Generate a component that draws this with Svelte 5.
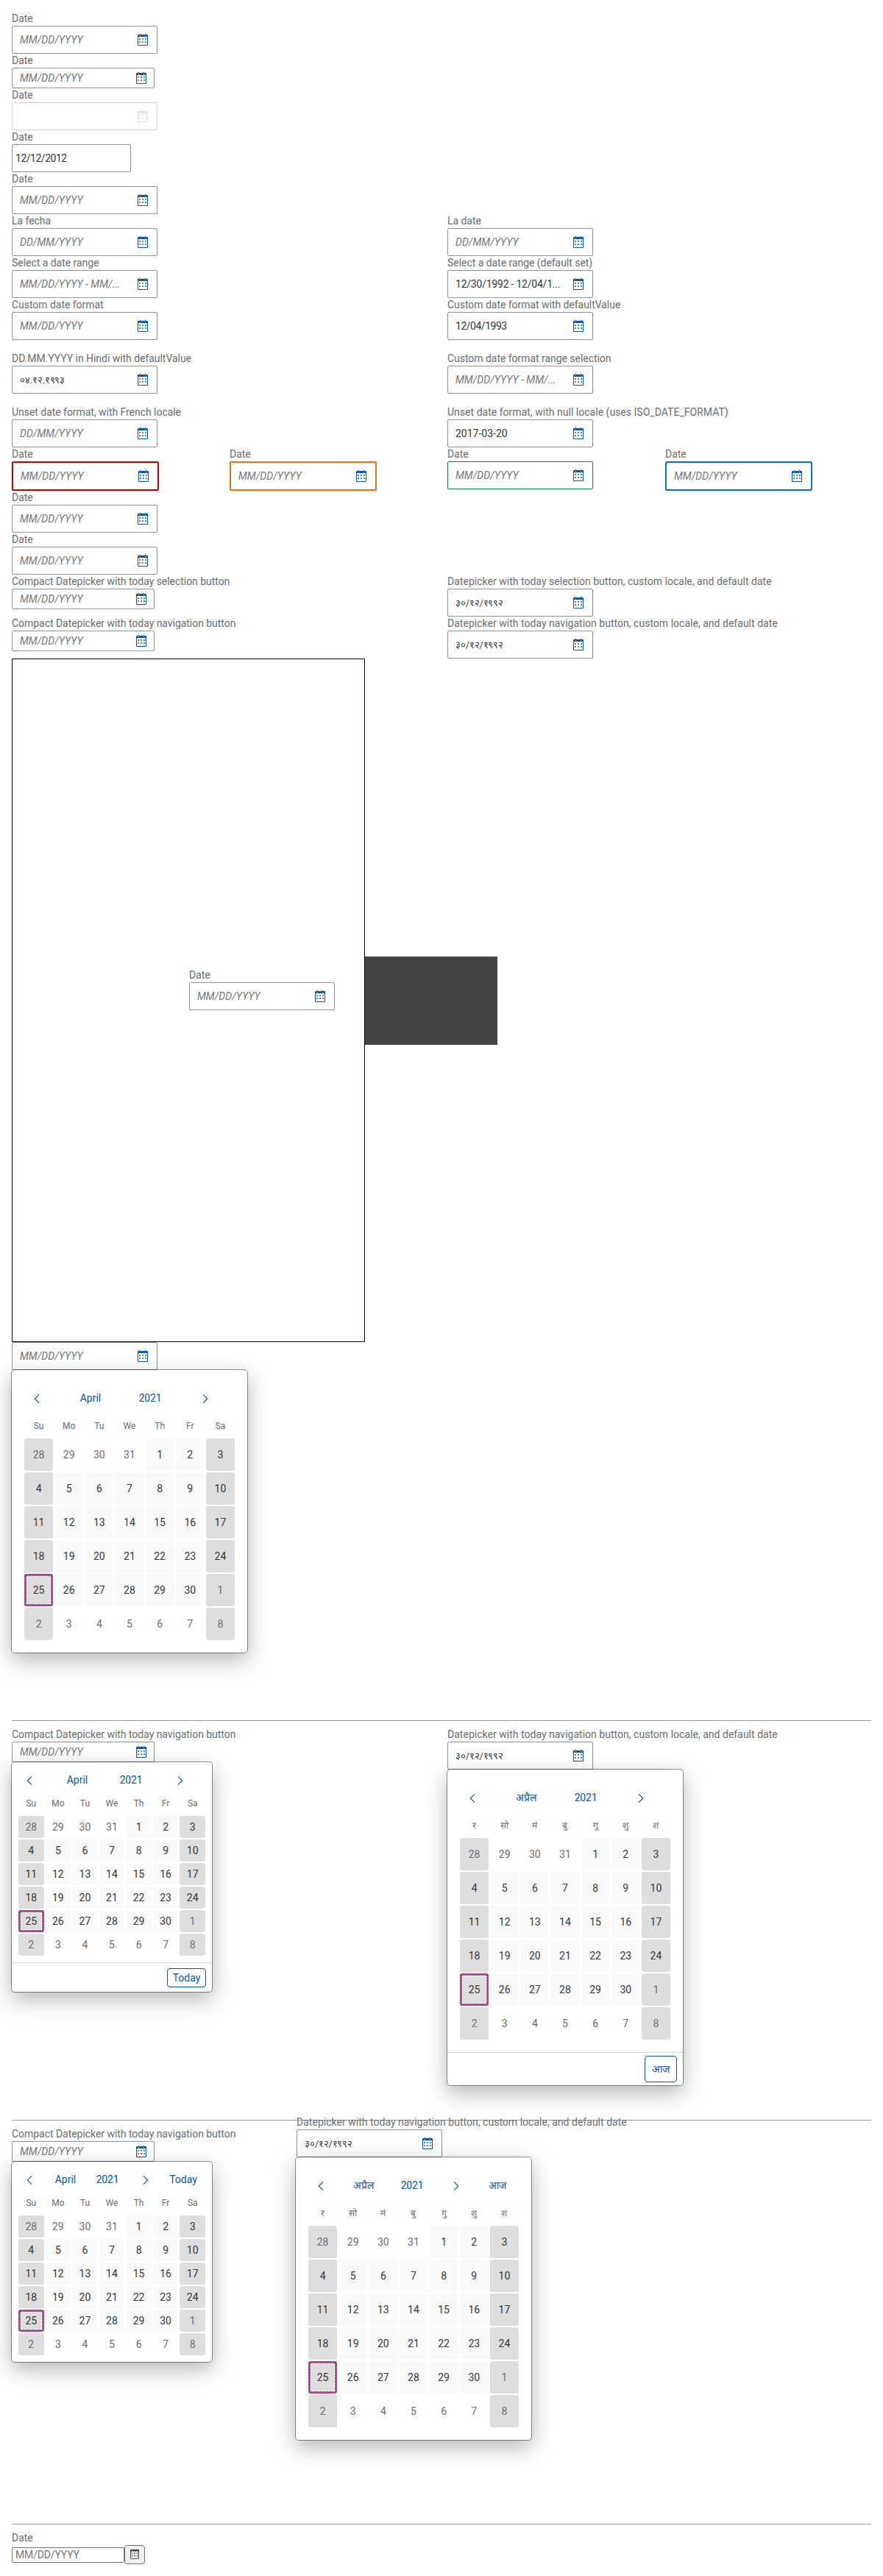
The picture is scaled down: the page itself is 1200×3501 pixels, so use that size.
<script>
  const EN = { month: 'April', today: 'Today', days: ['Su', 'Mo', 'Tu', 'We', 'Th', 'Fr', 'Sa'] };
  const HI = { month: 'अप्रैल', today: 'आज', days: ['र', 'सो', 'मं', 'बु', 'गु', 'शु', 'श'] };
  const NAV_LABEL = 'Compact Datepicker with today navigation button';
  const NAV_LABEL_HI = 'Datepicker with today navigation button, custom locale, and default date';

  const dates = Array.from({ length: 42 }, (_, i) => {
    const other = i < 4 || i > 33;
    const number = i < 4 ? 28 + i : i > 33 ? i - 33 : i - 3;
    return { number, other, weekend: i % 7 === 0 || i % 7 === 6, focused: i === 28 };
  });

  const rows = [
    [{ label: 'Date', placeholder: 'MM/DD/YYYY' }],
    [{ label: 'Date', placeholder: 'MM/DD/YYYY', compact: true }],
    [{ label: 'Date', disabled: true }],
    [{ label: 'Date', value: '12/12/2012', plain: true }],
    [{ label: 'Date', placeholder: 'MM/DD/YYYY' }],
    [{ label: 'La fecha', placeholder: 'DD/MM/YYYY' }, { label: 'La date', placeholder: 'DD/MM/YYYY' }],
    [
      { label: 'Select a date range', placeholder: 'MM/DD/YYYY - MM/...' },
      { label: 'Select a date range (default set)', value: '12/30/1992 - 12/04/1...', range: true }
    ],
    [
      { label: 'Custom date format', placeholder: 'MM/DD/YYYY' },
      { label: 'Custom date format with defaultValue', value: '12/04/1993' }
    ],
    [
      { label: 'DD.MM.YYYY in Hindi with defaultValue', value: '०४.१२.१९९३', hindi: true },
      { label: 'Custom date format range selection', placeholder: 'MM/DD/YYYY - MM/...' }
    ],
    [
      { label: 'Unset date format, with French locale', placeholder: 'DD/MM/YYYY' },
      {
        label: 'Unset date format, with null locale (uses ISO_DATE_FORMAT)',
        value: '2017-03-20',
        iso: true,
        wide: true
      }
    ],
    [
      { label: 'Date', placeholder: 'MM/DD/YYYY', state: 'error' },
      { label: 'Date', placeholder: 'MM/DD/YYYY', state: 'warning' },
      { label: 'Date', placeholder: 'MM/DD/YYYY', state: 'success' },
      { label: 'Date', placeholder: 'MM/DD/YYYY', state: 'information' }
    ],
    [{ label: 'Date', placeholder: 'MM/DD/YYYY' }],
    [{ label: 'Date', placeholder: 'MM/DD/YYYY' }],
    [
      { label: 'Compact Datepicker with today selection button', placeholder: 'MM/DD/YYYY', compact: true },
      {
        label: 'Datepicker with today selection button, custom locale, and default date',
        value: '३०/१२/१९९२',
        hindi: true,
        wide: true
      }
    ],
    [
      { label: NAV_LABEL, placeholder: 'MM/DD/YYYY', compact: true },
      { label: NAV_LABEL_HI, value: '३०/१२/१९९२', hindi: true, wide: true }
    ]
  ];
</script>

{#snippet calendarIcon()}
  <svg class="icon" viewBox="0 0 14 16" width="14" height="16" aria-hidden="true">
    <path
      fill="currentColor"
      fill-rule="evenodd"
      d="M3 0h1v1h6V0h1v1h2a1 1 0 0 1 1 1v13a1 1 0 0 1-1 1H1a1 1 0 0 1-1-1V2a1 1 0 0 1 1-1h2zM1 4v11h12V4zM3 2v1h1V2zM10 2v1h1V2z"
    />
    <path
      fill="currentColor"
      opacity="0.72"
      d="M2 6h2v2H2zM6 6h2v2H6zM10 6h2v2h-2zM2 10h2v2H2zM6 10h2v2H6zM10 10h2v2h-2z"
    />
  </svg>
{/snippet}

{#snippet chevron(next)}
  <svg class="chevron" class:next viewBox="0 0 8 12" width="8" height="12" aria-hidden="true">
    <path d="M7 .4 1.2 6 7 11.6" fill="none" stroke="currentColor" stroke-width="1.1" />
  </svg>
{/snippet}

{#snippet input(f)}
  <div class="input {f.state ?? ''}" class:compact={f.compact} class:disabled={f.disabled} class:plain={f.plain}>
    {#if f.placeholder}
      <span class="placeholder">{f.placeholder}</span>
    {:else}
      <span class="value" class:hindi={f.hindi} class:iso={f.iso} class:range={f.range}>{f.value ?? ''}</span>
    {/if}
    {#if !f.plain}{@render calendarIcon()}{/if}
  </div>
{/snippet}

{#snippet field(f)}
  <div class="field">
    <div class="label" class:wide={f.wide}>{f.label}</div>
    {@render input(f)}
  </div>
{/snippet}

{#snippet calendar(lang, compact, todayIn)}
  <div class="popover" class:compact>
    <div class="body">
      <div class="nav" class:with-today={todayIn === 'header'}>
        <span class="prev">{@render chevron(false)}</span>
        <span>{lang.month}</span>
        <span class="year">2021</span>
        <span>{@render chevron(true)}</span>
        {#if todayIn === 'header'}<span>{lang.today}</span>{/if}
      </div>
      <div class="weekdays">
        {#each lang.days as d}<span>{d}</span>{/each}
      </div>
      <div class="dates">
        {#each dates as d}
          <span class="date" class:other={d.other} class:weekend={d.weekend} class:focused={d.focused}>{d.number}</span>
        {/each}
      </div>
    </div>
    {#if todayIn === 'footer'}
      <div class="footer"><button class="today">{lang.today}</button></div>
    {/if}
  </div>
{/snippet}

<main>
  {#each rows as row, i}
    <div class="row" class:halves={row.length < 4} class:spaced={i === 8 || i === 9}>
      {#each row as f}{@render field(f)}{/each}
    </div>
  {/each}

  <div class="modal-box">
    <div class="modal-field">{@render field({ label: 'Date', placeholder: 'MM/DD/YYYY' })}</div>
    <div class="dark"></div>
  </div>

  <section class="open-default">
    <div class="anchor">
      {@render input({ placeholder: 'MM/DD/YYYY' })}
      {@render calendar(EN, false, '')}
    </div>
  </section>

  <hr />
  <section class="row halves open-footer">
    <div class="anchor">
      {@render field({ label: NAV_LABEL, placeholder: 'MM/DD/YYYY', compact: true })}
      {@render calendar(EN, true, 'footer')}
    </div>
    <div class="anchor">
      {@render field({ label: NAV_LABEL_HI, value: '३०/१२/१९९२', hindi: true, wide: true })}
      {@render calendar(HI, false, 'footer')}
    </div>
  </section>

  <hr />
  <section class="open-header">
    <div class="anchor first">
      {@render field({ label: NAV_LABEL, placeholder: 'MM/DD/YYYY', compact: true })}
      {@render calendar(EN, true, 'header')}
    </div>
    <div class="anchor raised">
      {@render field({ label: NAV_LABEL_HI, value: '३०/१२/१९९२', hindi: true, wide: true })}
      {@render calendar(HI, false, 'header')}
    </div>
  </section>

  <hr />
  <div class="label">Date</div>
  <div class="native">
    <div class="native-input">MM/DD/YYYY</div>
    <div class="native-button">{@render calendarIcon()}</div>
  </div>
</main>

<style>
  :global(body) {
    margin: 0;
    background: #fff;
  }
  main {
    box-sizing: border-box;
    height: 3501px;
    padding: 16px;
    overflow: hidden;
    color: #32363a;
    font: 14px/19px Roboto, 'Liberation Sans', sans-serif;
  }
  main :global(*) {
    box-sizing: border-box;
  }
  .row {
    display: grid;
    grid-template-columns: repeat(4, 296px);
    align-items: start;
  }
  .halves {
    grid-template-columns: repeat(2, 592px);
  }
  .spaced {
    margin-top: 16px;
  }
  .label {
    height: 19px;
    color: #6a6d70;
    white-space: nowrap;
    letter-spacing: -0.04px;
  }
  .label.wide {
    letter-spacing: 0.02px;
  }
  .input {
    display: flex;
    align-items: center;
    justify-content: space-between;
    width: 198px;
    height: 38px;
    padding: 0 12px 0 10px;
    border: 1px solid #89919a;
    border-radius: 2px;
    background: #fff;
    white-space: nowrap;
  }
  .input.compact {
    width: 194px;
    height: 28px;
    padding-right: 10px;
  }
  .input.plain {
    width: 162px;
    padding-left: 4px;
  }
  .input.disabled {
    border-color: #cfd3d6;
  }
  .input.disabled .icon {
    opacity: 0.16;
  }
  .error,
  .warning,
  .information {
    width: 200px;
    height: 40px;
    border-width: 2px;
  }
  .error {
    border-color: #b00;
  }
  .warning {
    border-color: #e9730c;
  }
  .success {
    border-color: #107e3e;
  }
  .information {
    border-color: #0a6ed1;
  }
  .placeholder {
    color: #74777a;
    font-style: italic;
  }
  .value {
    letter-spacing: -0.48px;
  }
  .value.range {
    letter-spacing: -0.22px;
  }
  .value.iso {
    letter-spacing: 0;
  }
  .value.hindi {
    font-size: 13px;
    letter-spacing: -0.18px;
  }
  .icon {
    display: block;
    flex: none;
    color: #0854a0;
  }

  .modal-box {
    display: flex;
    width: 480px;
    height: 929px;
    border: 1px solid #000;
  }
  .modal-field {
    flex: none;
    width: 479px;
    padding: 420px 0 0 240px;
  }
  .dark {
    flex: none;
    width: 180px;
    height: 120px;
    margin-top: 404px;
    background: #444;
  }

  hr {
    height: 1px;
    margin: 0 0 9px;
    border: 0;
    background: #9a9a9a;
  }
  .anchor {
    position: relative;
    width: max-content;
  }
  .open-default {
    height: 514px;
  }
  .open-footer {
    height: 533px;
  }
  .open-header {
    display: flex;
    align-items: flex-start;
    height: 539px;
  }
  .open-header .first {
    width: 387px;
  }
  .open-header .raised {
    margin-top: -16px;
  }
  .raised .popover {
    left: -1px;
  }

  .popover {
    position: absolute;
    top: 100%;
    left: 0;
    width: 320px;
    border-radius: 4px;
    background: #fff;
    box-shadow:
      0 0 0 1px rgba(0, 0, 0, 0.42),
      0 10px 30px rgba(0, 0, 0, 0.3);
  }
  .popover.compact {
    width: 272px;
  }
  .body {
    padding: 16px;
  }
  .compact .body {
    padding: 8px;
  }
  .nav {
    display: grid;
    grid-template-columns: 44px 94px 68px 82px;
    align-items: center;
    height: 44px;
    color: #0854a0;
    text-align: center;
  }
  .nav.with-today {
    grid-template-columns: 44px 64px 68px 52px 60px;
  }
  .compact .nav {
    grid-template-columns: 40px 82px 64px 70px;
    height: 32px;
  }
  .compact .nav.with-today {
    grid-template-columns: 40px 50px 64px 40px 62px;
  }
  .prev {
    padding-right: 8px;
  }
  .year {
    letter-spacing: -0.2px;
  }
  .chevron {
    display: inline-block;
    vertical-align: middle;
  }
  .chevron.next {
    transform: scaleX(-1);
  }
  .weekdays {
    display: grid;
    grid-template-columns: repeat(7, 1fr);
    height: 32px;
    color: #6a6d70;
    font-size: 12px;
    line-height: 32px;
    text-align: center;
  }
  .dates {
    display: grid;
    grid-template-columns: repeat(7, 1fr);
    grid-auto-rows: 46px;
  }
  .compact .dates {
    grid-auto-rows: 32px;
  }
  .date {
    display: flex;
    align-items: center;
    justify-content: center;
    margin: 1px;
    border-radius: 3px;
    background: #fafafa;
  }
  .date.other {
    background: none;
    color: #6a6d70;
  }
  .date.weekend {
    background: #dedede;
  }
  .date.focused {
    border: 2px solid #c0399f;
    outline: 1px dotted #000;
    outline-offset: -3px;
    box-shadow: inset 0 0 0 2px #fff;
  }
  .footer {
    display: flex;
    justify-content: flex-end;
    height: 45px;
    padding: 4px 8px 0 0;
    border-top: 1px solid #d9d9d9;
  }
  .compact .footer {
    height: 40px;
    padding-top: 7px;
  }
  .today {
    width: 44px;
    height: 36px;
    padding: 0;
    border: 1px solid #0854a0;
    border-radius: 4px;
    background: #fff;
    color: #0854a0;
    font: inherit;
  }
  .compact .today {
    width: 53px;
    height: 26px;
    line-height: 22px;
  }

  .native {
    display: flex;
    align-items: center;
    height: 26px;
  }
  .native-input {
    width: 153px;
    height: 21px;
    padding-left: 4px;
    border: 1px solid #767676;
    border-radius: 2px;
    color: #757575;
    letter-spacing: -0.15px;
  }
  .native-button {
    display: grid;
    place-items: center;
    width: 28px;
    height: 26px;
    padding-bottom: 2px;
    border: 1px solid #767676;
    border-radius: 4px;
    background: #efefef;
  }
  .native-button .icon {
    width: 12px;
    height: 14px;
    color: #32363a;
  }
</style>
